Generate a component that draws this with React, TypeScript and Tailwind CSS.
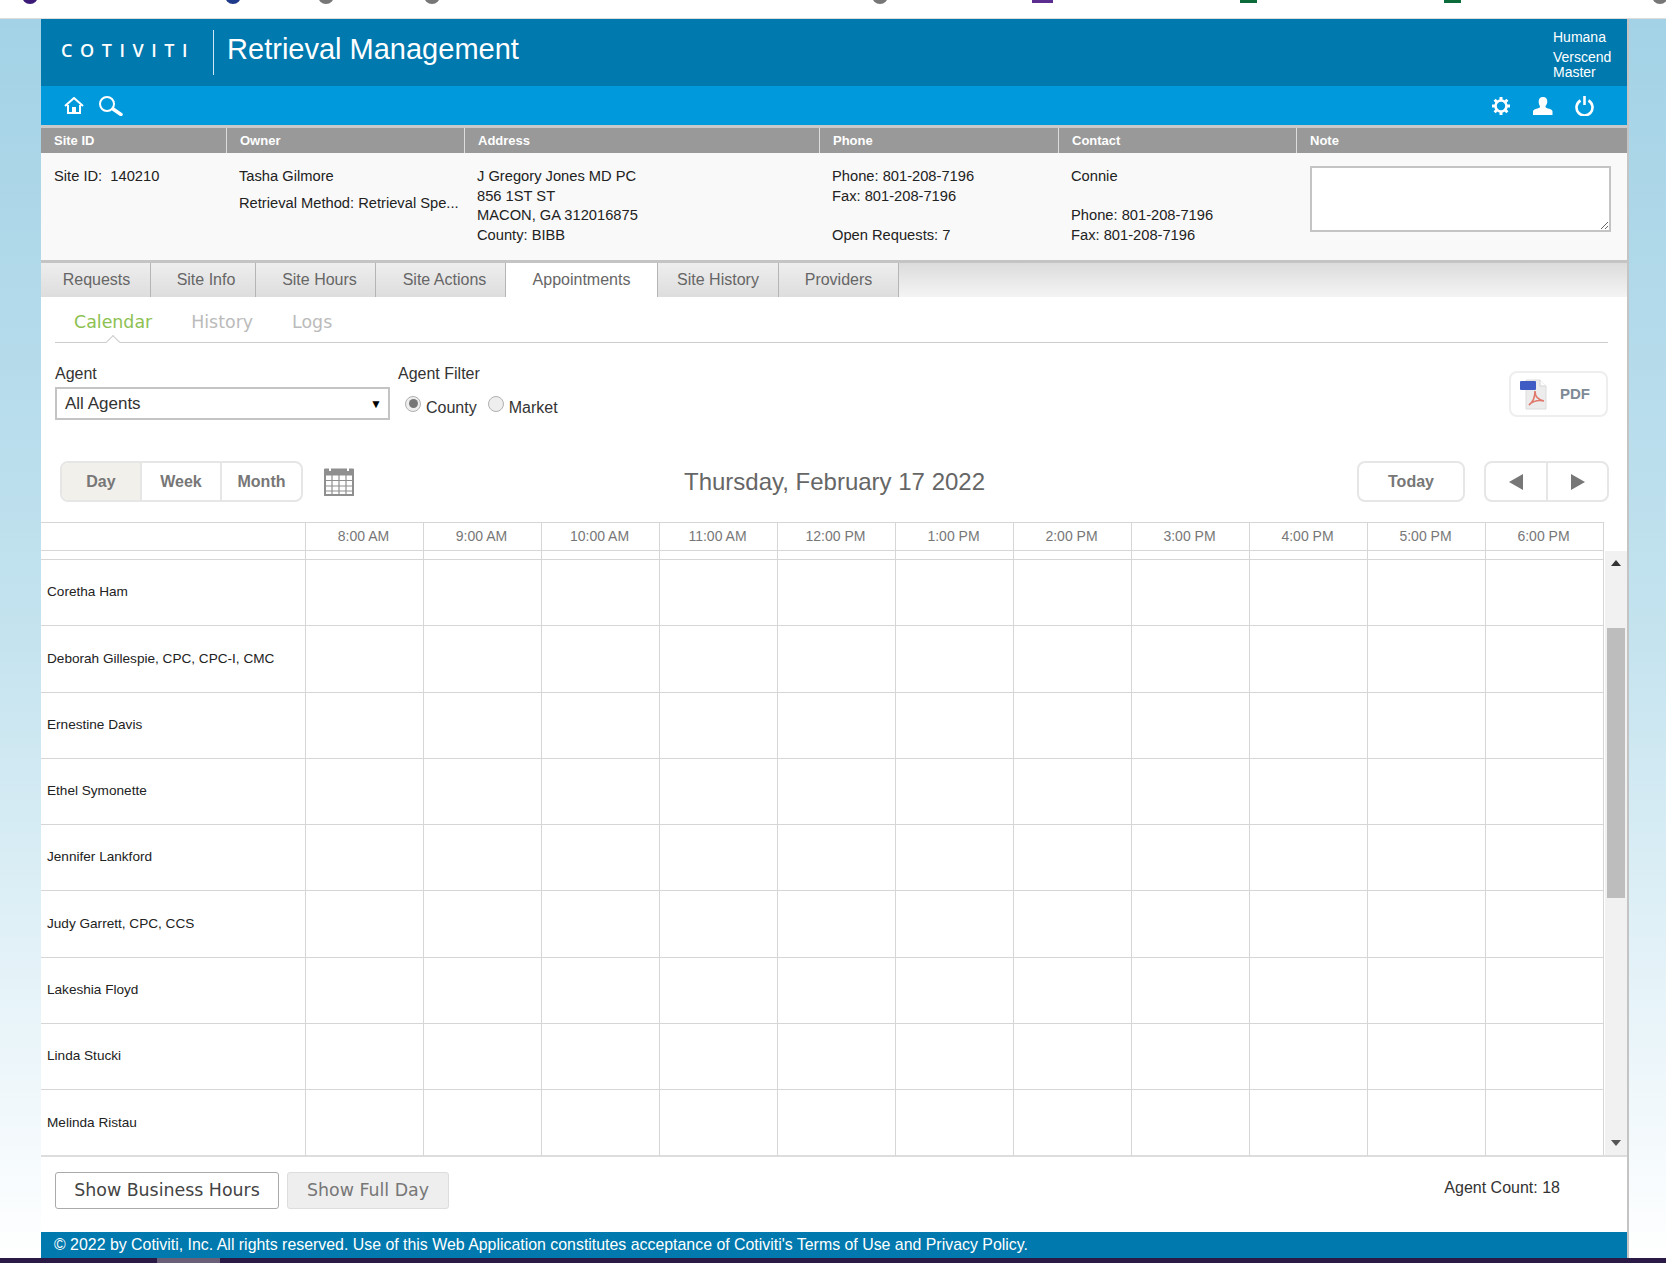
const sans = "font-['Liberation_Sans',Arial,sans-serif]";

const siteColumns = ['Site ID', 'Owner', 'Address', 'Phone', 'Contact', 'Note'];
const tabs = [
    { label: 'Requests', width: 'w-[110px] pl-[2px]' },
    { label: 'Site Info', width: 'w-[105px] pl-[6px]' },
    { label: 'Site Hours', width: 'w-[120px] pl-[8px]' },
    { label: 'Site Actions', width: 'w-[130px] pl-[8px]' },
    { label: 'Appointments', width: 'w-[152px]', active: true },
    { label: 'Site History', width: 'w-[121px]' },
    { label: 'Providers', width: 'w-[120px]' },
];
const hours = ['8:00 AM', '9:00 AM', '10:00 AM', '11:00 AM', '12:00 PM', '1:00 PM', '2:00 PM', '3:00 PM', '4:00 PM', '5:00 PM', '6:00 PM'];
const agents = [
    'Coretha Ham',
    'Deborah Gillespie, CPC, CPC-I, CMC',
    'Ernestine Davis',
    'Ethel Symonette',
    'Jennifer Lankford',
    'Judy Garrett, CPC, CCS',
    'Lakeshia Floyd',
    'Linda Stucki',
    'Melinda Ristau',
];

function HomeIcon() {
    return (
        <svg width="20" height="17" viewBox="0 0 20 17" fill="none" stroke="#fff" strokeWidth="2">
            <path d="M1 9l9-8 9 8" />
            <path d="M4 8v8h12V8" />
            <rect x="8" y="10" width="4" height="6" fill="#fff" stroke="none" />
        </svg>
    );
}

function SearchIcon() {
    return (
        <svg width="25" height="20" viewBox="0 0 25 20" fill="none" stroke="#fff">
            <circle cx="9" cy="8" r="7" strokeWidth="2" />
            <path d="M15 13l8 5.5" strokeWidth="3.4" strokeLinecap="round" />
        </svg>
    );
}

function GearIcon() {
    return (
        <svg width="20" height="18" viewBox="0 0 20 18" fill="none" stroke="#fff">
            <circle cx="10" cy="9" r="5.5" strokeWidth="2.6" />
            <path d="M10 0v3M10 15v3M1 9h3M16 9h3M3.6 2.8l2.2 2.2M14.2 13l2.2 2.2M3.6 15.2l2.2-2.2M14.2 5l2.2-2.2" strokeWidth="3" />
        </svg>
    );
}

function PersonIcon() {
    return (
        <svg width="20" height="18" viewBox="0 0 20 18">
            <path d="M10 0c3 0 4.300 2 4.300 4.500 0 2-1 3.500-1.800 4.500 0 1.500.5 2 2.500 2.500 3 .7 4.500 1.500 4.500 3V18H0v-3.500c0-1.500 1.500-2.300 4.500-3 2-.5 2.500-1 2.500-2.500C6.200 8 5.700 6.500 5.700 4.500 5.700 2 7 0 10 0z" fill="#fff" />
        </svg>
    );
}

function PowerIcon() {
    return (
        <svg width="19" height="20" viewBox="0 0 19 20" fill="none" stroke="#fff" strokeWidth="2.600">
            <path d="M5.500 4.500a8 8 0 1 0 8 0" />
            <path d="M9.500 0v9" />
        </svg>
    );
}

function PdfIcon() {
    return (
        <svg width="27" height="31" viewBox="0 0 27 31">
            <path d="M6 1h14l6 6v23H6z" fill="#ececec" stroke="#dcdcdc" />
            <path d="M20 1v6h6" fill="#fff" stroke="#d5d5d5" />
            <rect x="0" y="2" width="16" height="9" rx="1" fill="#3f5bc4" />
            <path d="M9 26c4-3 6-8 6-14 0 5 3 9 9 10-5-1-11 0-15 4z" fill="none" stroke="#e0796b" strokeWidth="1.600" />
        </svg>
    );
}

function CalendarIcon() {
    return (
        <svg width="30" height="28" viewBox="0 0 30 28" fill="none" stroke="#8f8f8f">
            <rect x="1" y="2" width="28" height="25" fill="#fff" strokeWidth="2" />
            <rect x="1" y="1" width="28" height="6" fill="#8f8f8f" />
            <path d="M8 7v20M15 7v20M22 7v20M1 12.500h28M1 18h28M1 23h28" strokeWidth="1.200" />
            <path d="M6 0v3M24 0v3" stroke="#fff" strokeWidth="2" />
        </svg>
    );
}

function BrowserStrip() {
    // what is left of the browser toolbar, cut off by the top of the capture
    return (
        <svg width="1666" height="18" viewBox="0 0 1666 18" className="block">
            <circle cx="30" cy="-4" r="8" fill="#3c1a78" />
            <circle cx="233" cy="-4" r="8" fill="#1f3a8a" />
            <circle cx="326" cy="-4" r="8" fill="#777" />
            <circle cx="432" cy="-4" r="8" fill="#777" />
            <circle cx="880" cy="-4" r="8" fill="#777" />
            <rect x="1032" y="0" width="21" height="3" fill="#5c2d91" />
            <rect x="1240" y="0" width="17" height="3" fill="#0b6b3a" />
            <rect x="1444" y="0" width="17" height="3" fill="#0b6b3a" />
            <circle cx="1660" cy="-4" r="8" fill="#777" />
        </svg>
    );
}

function SiteSummary() {
    return (
        <>
            <div className="grid h-[28px] grid-cols-[185px_238px_355px_239px_238px_1fr] border-t-[3px] border-[#c9c9c9] bg-[#999999]">
                {siteColumns.map((name, i) => (
                    <div key={name} className={`flex items-center pl-[13px] text-[13px] font-bold text-white ${i > 0 ? 'border-l border-[#dddddd]' : ''}`}>
                        {name}
                    </div>
                ))}
            </div>
            <div className="grid h-[107px] grid-cols-[185px_238px_355px_239px_238px_1fr] bg-[#f9f9f9] text-[14.7px] leading-[19.7px] text-[#222]">
                <div className="pl-[13px] pt-[14px]">Site ID:&nbsp; 140210</div>
                <div className="pl-[13px] pt-[14px]">
                    <div>Tasha Gilmore</div>
                    <div className="mt-[7px]">Retrieval Method: Retrieval Spe...</div>
                </div>
                <div className="pl-[13px] pt-[14px]">
                    <div>J Gregory Jones MD PC</div>
                    <div>856 1ST ST</div>
                    <div>MACON, GA 312016875</div>
                    <div>County: BIBB</div>
                </div>
                <div className="pl-[13px] pt-[14px]">
                    <div>Phone: 801-208-7196</div>
                    <div>Fax: 801-208-7196</div>
                    <div className="mt-[19.7px]">Open Requests: 7</div>
                </div>
                <div className="pl-[13px] pt-[14px]">
                    <div>Connie</div>
                    <div className="mt-[19.7px]">Phone: 801-208-7196</div>
                    <div>Fax: 801-208-7196</div>
                </div>
                <div className="pl-[14px] pr-[16px] pt-[13px]">
                    <textarea className="block h-[66px] w-full border-2 border-[#c4c4c4] bg-white" />
                </div>
            </div>
        </>
    );
}

function TabStrip() {
    return (
        <div className="flex h-[37px] border-t-[3px] border-[#c4c4c4] bg-gradient-to-b from-[#dcdcdc] to-[#f4f4f4]">
            {tabs.map((tab) => (
                <div
                    key={tab.label}
                    className={`flex items-center justify-center border-r border-[#b5b5b5] text-[16px] text-[#666] ${tab.width} ${tab.active ? 'bg-white' : 'bg-gradient-to-b from-[#eeeeee] to-[#dddddd]'}`}
                >
                    {tab.label}
                </div>
            ))}
        </div>
    );
}

function SubTabs() {
    return (
        <div className="relative ml-[14px] mr-[19px] flex h-[46px] items-center gap-[39px] border-b border-[#cccccc] pl-[19px] pt-[6px] font-['DejaVu_Sans',sans-serif] text-[17.4px] text-[#bbbbbb]">
            <span className="text-[#8cc152]">Calendar</span>
            <span>History</span>
            <span>Logs</span>
            <div className="absolute bottom-[-5px] left-[53px] h-[10px] w-[10px] rotate-45 border-l border-t border-[#cccccc] bg-white" />
        </div>
    );
}

function AgentFilters() {
    return (
        <div className="mx-[14px] mt-[21px] flex h-[52px] items-start text-[16px] text-[#333]">
            <div>
                <div className="leading-[20px]">Agent</div>
                <div className="mt-[3px] flex h-[33px] w-[335px] items-center justify-between border-2 border-[#c4c4c4] pl-[8px] pr-[6px] text-[17px]">
                    All Agents
                    <span className="text-[12px] text-black">▼</span>
                </div>
            </div>
            <div className="ml-[8px]">
                <div className="leading-[20px]">Agent Filter</div>
                <div className="mt-[3px] flex items-center pl-[7px]">
                    <span className="flex h-[16px] w-[16px] items-center justify-center rounded-full border border-[#b0b0b0] bg-[#eeeeee]">
                        <span className="h-[9px] w-[9px] rounded-full bg-[#777]" />
                    </span>
                    <span className="ml-[5px] mt-[9px]">County</span>
                    <span className="ml-[11px] h-[16px] w-[16px] rounded-full border border-[#b0b0b0] bg-[#eeeeee]" />
                    <span className="ml-[5px] mt-[9px]">Market</span>
                </div>
            </div>
            <div className="ml-auto mr-[5px] mt-[7px] flex h-[46px] w-[99px] items-center rounded-[8px] border-2 border-[#eeeeee] pl-[9px] text-[#7d8a96]">
                <PdfIcon />
                <span className="ml-[13px] text-[15px] font-bold">PDF</span>
            </div>
        </div>
    );
}

function CalendarToolbar() {
    return (
        <div className="ml-[19px] mr-[18px] mt-[45px] grid h-[41px] grid-cols-[1fr_auto_1fr] items-center">
            <div className="flex items-center">
                <div className="flex h-[41px] overflow-hidden rounded-[8px] border-2 border-[#e6e6e6] text-[16px] font-bold text-[#777]">
                    <div className="flex w-[80px] items-center justify-center border-r-2 border-[#e6e6e6] bg-[#f2f0ea]">Day</div>
                    <div className="flex w-[80px] items-center justify-center border-r-2 border-[#e6e6e6]">Week</div>
                    <div className="flex w-[79px] items-center justify-center">Month</div>
                </div>
                <div className="ml-[21px]">
                    <CalendarIcon />
                </div>
            </div>
            <div className="text-[24px] text-[#666]">Thursday, February 17 2022</div>
            <div className="flex items-center justify-end text-[16px] font-bold text-[#777]">
                <div className="flex h-[41px] w-[108px] items-center justify-center rounded-[8px] border-2 border-[#e6e6e6]">Today</div>
                <div className="ml-[19px] flex h-[41px] w-[125px] rounded-[8px] border-2 border-[#e6e6e6]">
                    <div className="flex w-[62px] items-center justify-center border-r-2 border-[#e6e6e6]">
                        <svg width="14" height="16" viewBox="0 0 14 16"><path d="M14 0v16L0 8z" fill="#777" /></svg>
                    </div>
                    <div className="flex flex-1 items-center justify-center">
                        <svg width="14" height="16" viewBox="0 0 14 16"><path d="M0 0v16l14-8z" fill="#777" /></svg>
                    </div>
                </div>
            </div>
        </div>
    );
}

function CalendarGrid() {
    return (
        <div className="mt-[20px]">
            <div className="grid h-[29px] w-[1563px] grid-cols-[264px_repeat(11,1fr)] border-y border-r border-[#d6d6d6]">
                <div />
                {hours.map((hour) => (
                    <div key={hour} className="flex items-center justify-center border-l border-[#d6d6d6] pr-[2px] text-[14px] text-[#777]">
                        {hour}
                    </div>
                ))}
            </div>
            <div className="flex h-[606px] border-b-2 border-[#dddddd]">
                <div className="w-[1563px] border-r border-[#d6d6d6]">
                    <div className="grid h-[9px] grid-cols-[264px_repeat(11,1fr)] border-b border-[#d6d6d6]">
                        <div />
                        {hours.map((hour) => (
                            <div key={hour} className="border-l border-[#d6d6d6]" />
                        ))}
                    </div>
                    {agents.map((agent) => (
                        <div key={agent} className="grid h-[66.25px] grid-cols-[264px_repeat(11,1fr)] border-b border-[#d6d6d6] last:border-b-0">
                            <div className="flex items-center pl-[6px] text-[13.6px] text-[#222]">{agent}</div>
                            {hours.map((hour) => (
                                <div key={hour} className="border-l border-[#d6d6d6]" />
                            ))}
                        </div>
                    ))}
                </div>
                <div className="relative ml-[1px] flex-1 bg-[#f1f1f1]">
                    <div className="absolute left-[2px] top-[77px] h-[270px] w-[18px] bg-[#bdbdbd]" />
                    <svg className="absolute left-[6px] top-[9px]" width="10" height="6" viewBox="0 0 10 6"><path d="M0 6h10L5 0z" fill="#333" /></svg>
                    <svg className="absolute bottom-[9px] left-[6px]" width="10" height="6" viewBox="0 0 10 6"><path d="M0 0h10L5 6z" fill="#555" /></svg>
                </div>
            </div>
        </div>
    );
}

export default function App() {
    return (
        <div className={`flex h-[1263px] w-[1666px] flex-col overflow-hidden bg-white ${sans}`}>
            <div className="h-[19px] border-b border-[#dddddd] bg-white">
                <BrowserStrip />
            </div>
            <div className="flex h-[1239px] bg-gradient-to-b from-[#a3d2e6] via-[#c4e3ef] to-white pl-[41px]">
                <div className="flex w-[1588px] flex-col border-r-2 border-[#c4c4c4] bg-white">
                    <header className="flex h-[67px] bg-[#0079ae] text-white">
                        <div className="ml-[20px] flex h-[63px] items-center font-['Open_Sans',sans-serif] text-[18px] font-semibold tracking-[0.42em]">COTIVITI</div>
                        <div className="ml-[18px] mt-[11px] h-[45px] w-px bg-[#cfe8f3]" />
                        <div className="ml-[13px] mt-[10px] text-[29px] leading-[40px]">Retrieval Management</div>
                        <div className="ml-auto mr-[14px] w-[60px] pt-[11px] text-[14px] leading-[15px]">
                            <div className="mb-[5px]">Humana</div>
                            <div>Verscend Master</div>
                        </div>
                    </header>
                    <nav className="flex h-[39px] items-center bg-[#0099dc]">
                        <div className="ml-[23px]">
                            <HomeIcon />
                        </div>
                        <div className="ml-[14px] mt-[1px]">
                            <SearchIcon />
                        </div>
                        <div className="ml-auto">
                            <GearIcon />
                        </div>
                        <div className="ml-[22px]">
                            <PersonIcon />
                        </div>
                        <div className="ml-[22px] mr-[33px]">
                            <PowerIcon />
                        </div>
                    </nav>
                    <SiteSummary />
                    <TabStrip />
                    <SubTabs />
                    <AgentFilters />
                    <CalendarToolbar />
                    <CalendarGrid />
                    <div className="flex h-[75px] items-start px-[14px] pt-[15px]">
                        <button className="h-[37px] w-[224px] rounded-[3px] border border-[#aaaaaa] bg-white font-['DejaVu_Sans',sans-serif] text-[17.4px] text-[#444]">Show Business Hours</button>
                        <button className="ml-[8px] h-[37px] w-[162px] rounded-[3px] border border-[#dddddd] bg-[#eeeeee] font-['DejaVu_Sans',sans-serif] text-[17.4px] text-[#777]">Show Full Day</button>
                        <div className="ml-auto mr-[53px] mt-[4px] text-[16px] text-[#333]">Agent Count: 18</div>
                    </div>
                    <footer className="flex h-[26px] items-center bg-[#0079ae] pl-[13px] text-[15.9px] text-white">
                        © 2022 by Cotiviti, Inc. All rights reserved. Use of this Web Application constitutes acceptance of Cotiviti's Terms of Use and Privacy Policy.
                    </footer>
                </div>
            </div>
            <div className="h-[5px] bg-[#2a1a45] pl-[157px]">
                <div className="h-[5px] w-[63px] bg-[#6b5f78]" />
            </div>
        </div>
    );
}
